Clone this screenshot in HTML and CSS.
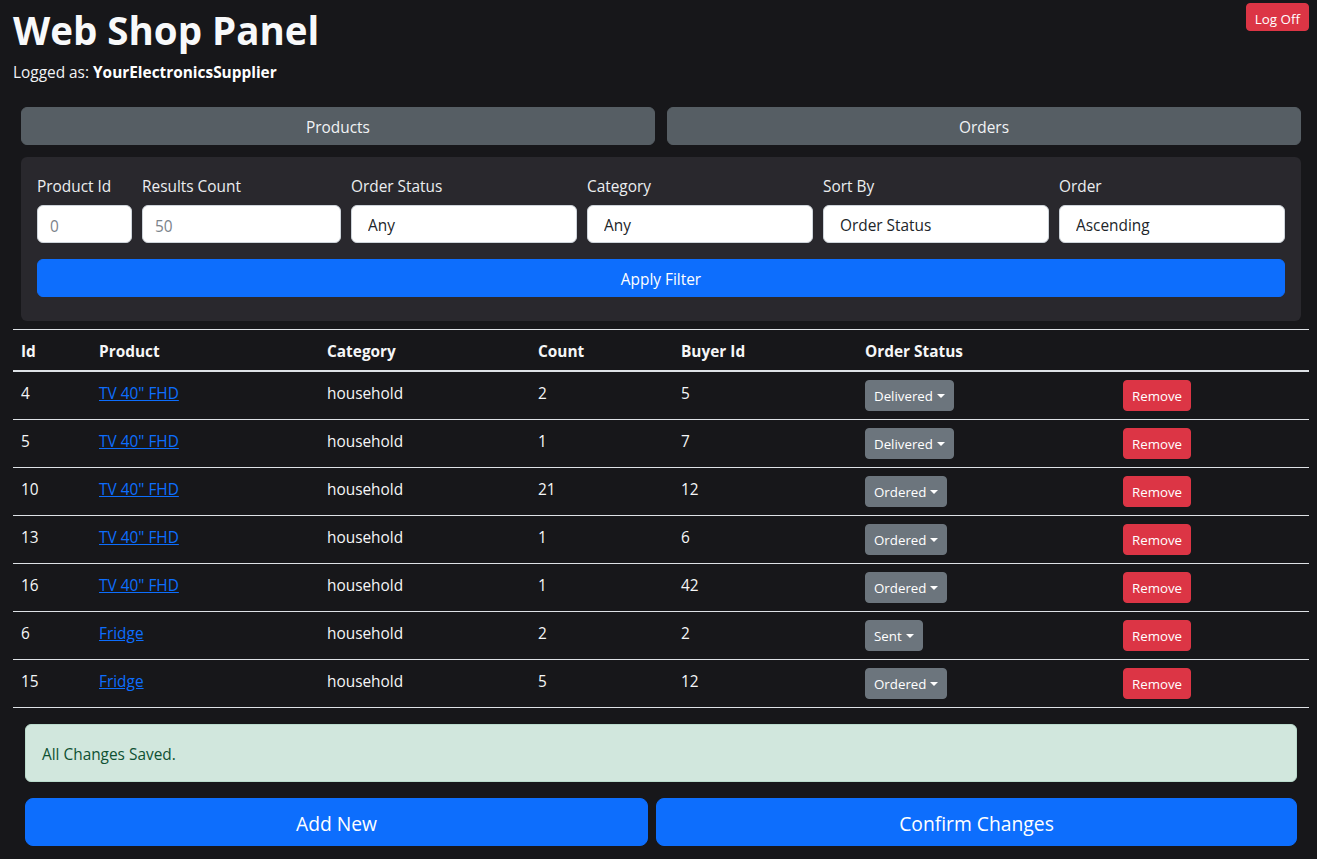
FILE: index.html
```html
<!DOCTYPE html>
<html lang="en">
<head>
<meta charset="utf-8">
<title>Web Shop Panel</title>
<link rel="stylesheet" href="styles.css">
</head>
<body>
<div class="page">
  <header class="top">
    <div class="brand">
      <h1 class="title">Web Shop Panel</h1>
      <p class="who">Logged as: <b>YourElectronicsSupplier</b></p>
    </div>
    <button class="btn btn-danger logoff" type="button">Log Off</button>
  </header>

  <nav class="tabs">
    <button class="tab" type="button">Products</button>
    <button class="tab" type="button">Orders</button>
  </nav>

  <form class="filter">
    <div class="fields">
      <label class="field">
        <span class="field-label">Product Id</span>
        <input class="input" type="text" placeholder="0">
      </label>
      <label class="field">
        <span class="field-label">Results Count</span>
        <input class="input" type="text" placeholder="50">
      </label>
      <label class="field">
        <span class="field-label">Order Status</span>
        <select class="input select"><option>Any</option></select>
      </label>
      <label class="field">
        <span class="field-label">Category</span>
        <select class="input select"><option>Any</option></select>
      </label>
      <label class="field">
        <span class="field-label">Sort By</span>
        <select class="input select"><option>Order Status</option></select>
      </label>
      <label class="field">
        <span class="field-label">Order</span>
        <select class="input select"><option>Ascending</option></select>
      </label>
    </div>
    <button class="btn btn-primary apply" type="button">Apply Filter</button>
  </form>

  <table class="orders">
    <colgroup>
      <col class="c-id"><col class="c-product"><col class="c-category"><col class="c-count"><col class="c-buyer"><col class="c-status"><col class="c-action">
    </colgroup>
    <thead>
      <tr><th>Id</th><th>Product</th><th>Category</th><th>Count</th><th>Buyer Id</th><th>Order Status</th><th></th></tr>
    </thead>
    <tbody>
      <tr><td>4</td><td><a href="#">TV 40" FHD</a></td><td>household</td><td>2</td><td>5</td><td><button class="btn btn-sm btn-secondary dropdown" type="button">Delivered</button></td><td><button class="btn btn-sm btn-danger" type="button">Remove</button></td></tr>
      <tr><td>5</td><td><a href="#">TV 40" FHD</a></td><td>household</td><td>1</td><td>7</td><td><button class="btn btn-sm btn-secondary dropdown" type="button">Delivered</button></td><td><button class="btn btn-sm btn-danger" type="button">Remove</button></td></tr>
      <tr><td>10</td><td><a href="#">TV 40" FHD</a></td><td>household</td><td>21</td><td>12</td><td><button class="btn btn-sm btn-secondary dropdown" type="button">Ordered</button></td><td><button class="btn btn-sm btn-danger" type="button">Remove</button></td></tr>
      <tr><td>13</td><td><a href="#">TV 40" FHD</a></td><td>household</td><td>1</td><td>6</td><td><button class="btn btn-sm btn-secondary dropdown" type="button">Ordered</button></td><td><button class="btn btn-sm btn-danger" type="button">Remove</button></td></tr>
      <tr><td>16</td><td><a href="#">TV 40" FHD</a></td><td>household</td><td>1</td><td>42</td><td><button class="btn btn-sm btn-secondary dropdown" type="button">Ordered</button></td><td><button class="btn btn-sm btn-danger" type="button">Remove</button></td></tr>
      <tr><td>6</td><td><a href="#">Fridge</a></td><td>household</td><td>2</td><td>2</td><td><button class="btn btn-sm btn-secondary dropdown" type="button">Sent</button></td><td><button class="btn btn-sm btn-danger" type="button">Remove</button></td></tr>
      <tr><td>15</td><td><a href="#">Fridge</a></td><td>household</td><td>5</td><td>12</td><td><button class="btn btn-sm btn-secondary dropdown" type="button">Ordered</button></td><td><button class="btn btn-sm btn-danger" type="button">Remove</button></td></tr>
    </tbody>
  </table>

  <div class="alert">All Changes Saved.</div>

  <div class="actions">
    <button class="btn btn-primary btn-lg" type="button">Add New</button>
    <button class="btn btn-primary btn-lg" type="button">Confirm Changes</button>
  </div>
</div>
</body>
</html>
```

FILE: styles.css
```css
* {
  box-sizing: border-box;
}

html,
body {
  margin: 0;
}

body {
  background: #17171a;
  color: #e9ecef;
  font-family: "Open Sans", "Noto Sans", sans-serif;
  font-size: 15.4px;
  line-height: 24px;
}

.page {
  padding: 0 8px 0 13px;
}

/* header */
.top {
  display: flex;
  justify-content: space-between;
  align-items: flex-start;
}

.title {
  margin: 6px 0 7px 0;
  font-size: 38.5px;
  line-height: 48px;
  font-weight: 700;
  color: #f8f9fa;
}

.who {
  margin: 0;
  color: #f1f3f5;
}

.who b {
  font-weight: 700;
  color: #ffffff;
}

/* buttons */
.btn {
  font-family: inherit;
  font-size: 15.4px;
  line-height: 24px;
  border: 1px solid transparent;
  border-radius: 6px;
  color: #ffffff;
  padding: 8px 12px 4px;
  cursor: pointer;
}

.btn-sm {
  font-size: 13.3px;
  line-height: 21px;
  padding: 5px 8px 3px;
  border-radius: 4px;
}

.btn-lg {
  font-size: 19.3px;
  line-height: 30px;
  padding: 10px 16px 6px;
  border-radius: 8px;
}

.btn-danger {
  background: #dc3545;
  border-color: #dc3545;
}

.btn-primary {
  background: #0d6efd;
  border-color: #0d6efd;
}

.btn-secondary {
  background: #6c757d;
  border-color: #6c757d;
}

.logoff {
  margin-top: 3px;
  font-size: 13.4px;
  line-height: 20px;
  padding: 5px 8px 1px;
  border-radius: 4px;
}

.dropdown::after {
  content: "";
  display: inline-block;
  margin-left: 4px;
  vertical-align: 3px;
  border-top: 4.2px solid #ffffff;
  border-left: 4.2px solid transparent;
  border-right: 4.2px solid transparent;
}

/* tabs */
.tabs {
  display: grid;
  grid-template-columns: 1fr 1fr;
  gap: 12px;
  margin: 22px 8px 0;
}

.tab {
  font-family: inherit;
  font-size: 15.4px;
  line-height: 24px;
  padding: 8px 12px 4px;
  background: #565e64;
  border: 1px solid #565e64;
  border-radius: 6px;
  color: #f1f3f5;
}

/* filter */
.filter {
  margin: 12px 8px 0;
  background: #29282d;
  border-radius: 6px;
  padding: 16px 16px 24px;
}

.fields {
  display: grid;
  grid-template-columns: 95px 199px repeat(4, 1fr);
  gap: 10px;
}

.field {
  display: flex;
  flex-direction: column;
  gap: 6px;
  min-width: 0;
}

.field-label {
  padding-top: 2px;
  line-height: 24px;
  color: #eceef0;
}

.input {
  width: 100%;
  height: 38px;
  margin: 0;
  background: #ffffff;
  border: 1px solid #ced4da;
  border-radius: 6px;
  padding: 8px 12px 4px;
  font-family: inherit;
  font-size: 15.4px;
  line-height: 24px;
  color: #212529;
}

.input::placeholder {
  color: #7b838a;
}

.select {
  appearance: none;
  -webkit-appearance: none;
  padding-left: 16px;
}

.apply {
  display: block;
  width: 100%;
  margin-top: 16px;
}

/* table */
.orders {
  width: 100%;
  margin-top: 8px;
  border-collapse: collapse;
  table-layout: fixed;
  color: #f5f6f7;
}

.c-id { width: 78px; }
.c-product { width: 228px; }
.c-category { width: 211px; }
.c-count { width: 143px; }
.c-buyer { width: 184px; }
.c-status { width: 258px; }
.c-action { width: 194px; }

.orders th {
  text-align: left;
  font-weight: 700;
  padding: 10px 8px 6px;
  border-top: 1px solid #dee2e6;
  border-bottom: 2px solid #dee2e6;
}

.orders td {
  padding: 8px;
  height: 48px;
  line-height: 28px;
  border-bottom: 1px solid #dee2e6;
  vertical-align: top;
}

.orders a {
  color: #0d6efd;
  text-decoration: underline;
}

/* alert */
.alert {
  margin: 16px 12px 0;
  padding: 18px 16px 14px;
  background: #d1e7dd;
  border: 1px solid #badbcc;
  border-radius: 6px;
  color: #0f5132;
}

/* actions */
.actions {
  display: grid;
  grid-template-columns: 623fr 641fr;
  gap: 8px;
  margin: 16px 12px 0;
}
```
